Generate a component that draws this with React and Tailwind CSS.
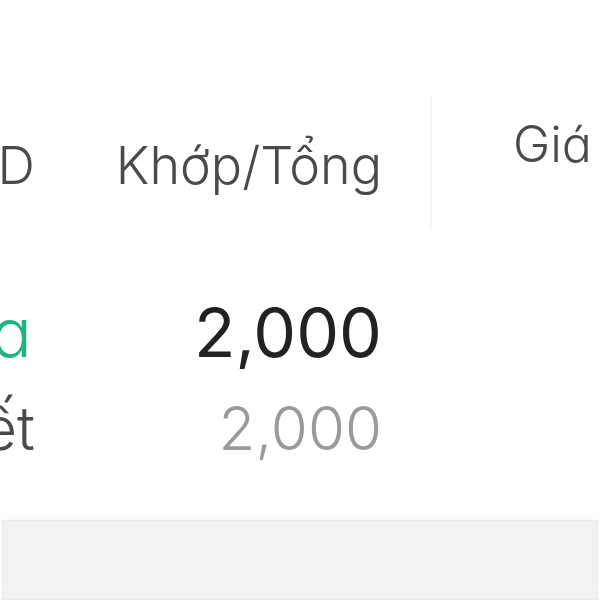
import React from 'react';

const font = { fontFamily: 'Inter, "Noto Sans", sans-serif' };

// one row of the order table, left column is clipped by the viewport
const Row = ({ side, sideClass, qty, qtyClass, rowClass }) => (
  <div className={`flex ${rowClass}`}>
    <div className={`w-[135px] ml-[-100px] flex justify-end whitespace-nowrap ${sideClass}`}>
      <span>{side}</span>
    </div>
    <div className={`w-[347px] text-right ${qtyClass}`}>{qty}</div>
  </div>
);

export default function App() {
  return (
    <div
      className="w-[600px] h-[600px] overflow-hidden bg-white flex flex-col [font-feature-settings:'cv11'_1]"
      style={font}
    >
      {/* Header */}
      <div className="h-[240px] flex shrink-0 font-light text-[#4a4a4a]">
        <div className="w-[135px] ml-[-100px] pt-[136px] flex justify-end text-[52px] leading-[60px] whitespace-nowrap">
          <span>Lệnh/ID</span>
        </div>
        <div className="w-[347px] pt-[136px] text-right text-[52px] leading-[60px] whitespace-nowrap">
          Khớp/Tổng
        </div>
        <div className="w-[48px]" />
        <div className="mt-[95px] h-[135px] border-l-2 border-[#f5f5f5] pl-[81px] pt-[19px] text-[50px] leading-[60px] whitespace-nowrap">
          Giá
        </div>
      </div>

      {/* Body rows */}
      <Row
        rowClass="mt-[52px] text-[68px] leading-[80px]"
        side="Mua"
        sideClass="text-[#21b383] pr-[3px] font-light"
        qty="2,000"
        qtyClass="text-[#222222]"
      />
      <Row
        rowClass="mt-[24px] text-[60px] leading-[64px] font-light"
        side="Khớp hết"
        sideClass="text-[#4a4a4a]"
        qty="2,000"
        qtyClass="text-[#9a9a9a]"
      />

      <div className="flex-1" />

      {/* Footer bar */}
      <div className="h-[80px] shrink-0 mx-[2px] bg-[#f2f2f2] border border-[#e9e9e9] shadow-[0_-6px_8px_rgba(0,0,0,0.02)]" />
    </div>
  );
}
